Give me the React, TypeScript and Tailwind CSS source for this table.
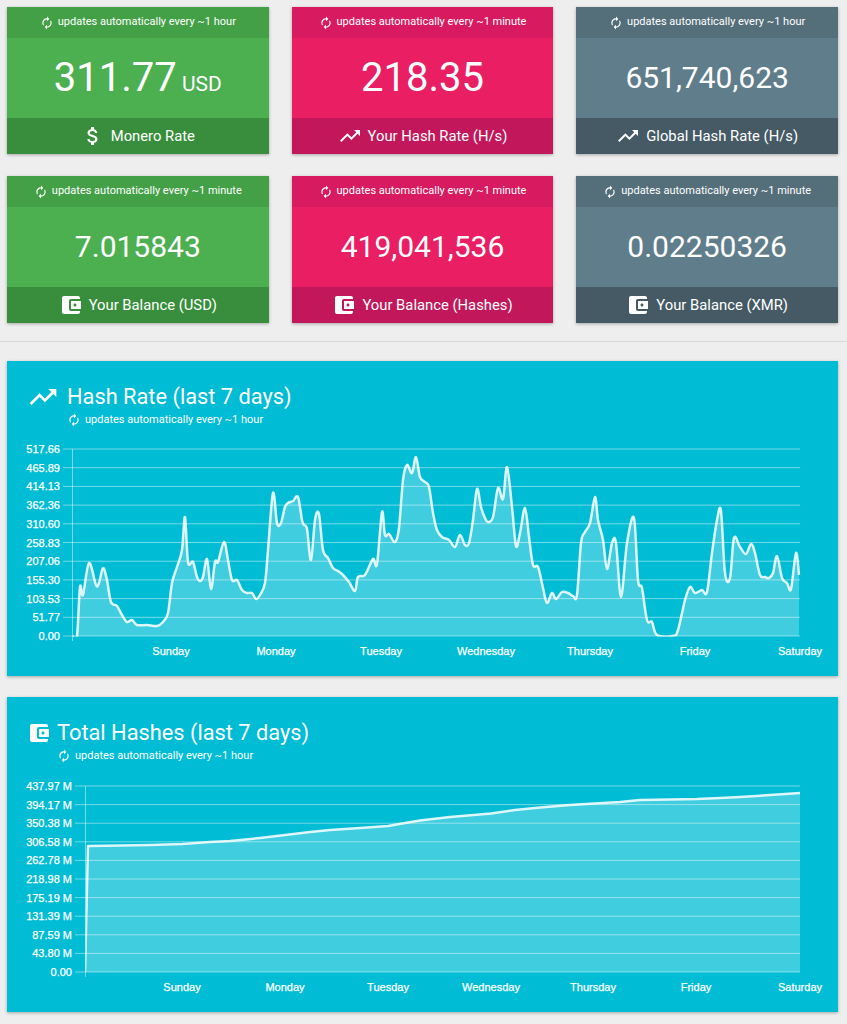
import type { ReactNode } from 'react'

const P_REFRESH =
  'M12 6v3l4-4-4-4v3c-4.42 0-8 3.58-8 8 0 1.57.46 3.03 1.24 4.26L6.7 14.8c-.45-.83-.7-1.79-.7-2.8 0-3.31 2.69-6 6-6zm6.76 1.74L17.3 9.2c.44.84.7 1.79.7 2.8 0 3.31-2.69 6-6 6v-3l-4 4 4 4v-3c4.42 0 8-3.58 8-8 0-1.570-.46-3.03-1.24-4.26z'
const P_TREND = 'M16 6l2.29 2.29-4.88 4.88-4-4L2 16.59 3.41 18l6-6 4 4 6.3-6.29L22 12V6z'
const P_DOLLAR =
  'M11.8 10.9c-2.27-.59-3-1.2-3-2.15 0-1.09 1.01-1.85 2.7-1.85 1.78 0 2.44.85 2.5 2.1h2.21c-.07-1.72-1.12-3.3-3.21-3.81V3h-3v2.16c-1.94.42-3.5 1.68-3.5 3.61 0 2.31 1.91 3.46 4.7 4.13 2.5.6 3 1.48 3 2.41 0 .69-.49 1.79-2.7 1.79-2.06 0-2.87-.92-2.98-2.1h-2.2c.12 2.19 1.76 3.42 3.68 3.830V21h3v-2.15c1.95-.37 3.5-1.5 3.5-3.55 0-2.84-2.43-3.81-4.7-4.4z'
const P_WALLET =
  'M21 18v1c0 1.1-.9 2-2 2H5c-1.11 0-2-.9-2-2V5c0-1.1.89-2 2-2h14c1.1 0 2 .9 2 2v1h-9c-1.11 0-2 .9-2 2v8c0 1.1.89 2 2 2h9zm-9-2h10V8H12v8zm4-2.5c-.83 0-1.5-.67-1.5-1.5s.67-1.5 1.5-1.5 1.5.67 1.5 1.5-.67 1.5-1.5 1.5z'

function Icon({ d, size }: { d: string; size: number }) {
  return (
    <svg width={size} height={size} viewBox="0 0 24 24" fill="currentColor" className="shrink-0">
      <path d={d} />
    </svg>
  )
}

type Tone = { head: string; main: string; foot: string }
const GREEN: Tone = { head: 'bg-[#43a047]', main: 'bg-[#4caf50]', foot: 'bg-[#388e3c]' }
const PINK: Tone = { head: 'bg-[#d81b60]', main: 'bg-[#e91e63]', foot: 'bg-[#c2185b]' }
const GREY: Tone = { head: 'bg-[#546e7a]', main: 'bg-[#607d8b]', foot: 'bg-[#455a64]' }

function StatCard({
  tone,
  every,
  value,
  big,
  unit,
  icon,
  label,
}: {
  tone: Tone
  every: string
  value: string
  big?: boolean
  unit?: string
  icon: string
  label: string
}) {
  return (
    <div className="overflow-hidden text-white shadow-[0_1px_3px_rgba(0,0,0,0.3)]">
      <div className={`flex h-[31px] items-center justify-center gap-[4px] text-[11px] ${tone.head}`}>
        <Icon d={P_REFRESH} size={14} />
        <span>updates automatically every ~{every}</span>
      </div>
      <div className={`flex h-[80px] items-center justify-center ${tone.main}`}>
        <span className={big ? 'text-[40px] leading-none' : 'text-[30px] leading-none'}>
          {value}
          {unit && <span className="text-[21px]"> {unit}</span>}
        </span>
      </div>
      <div className={`flex h-[36px] items-center justify-center gap-[6px] text-[14.8px] ${tone.foot}`}>
        <Icon d={icon} size={24} />
        <span>{label}</span>
      </div>
    </div>
  )
}

type Pt = [number, number]

function smooth(pts: Pt[]) {
  let d = `M${pts[0][0]},${pts[0][1]}`
  for (let i = 0; i < pts.length - 1; i++) {
    const p0 = pts[i - 1] || pts[i]
    const p1 = pts[i]
    const p2 = pts[i + 1]
    const p3 = pts[i + 2] || p2
    const c1x = p1[0] + (p2[0] - p0[0]) / 6
    const c1y = p1[1] + (p2[1] - p0[1]) / 6
    const c2x = p2[0] - (p3[0] - p1[0]) / 6
    const c2y = p2[1] - (p3[1] - p1[1]) / 6
    d += ` C${c1x.toFixed(1)},${c1y.toFixed(1)} ${c2x.toFixed(1)},${c2y.toFixed(1)} ${p2[0]},${p2[1]}`
  }
  return d
}

function straight(pts: Pt[]) {
  return pts.map((p, i) => `${i ? 'L' : 'M'}${p[0]},${p[1]}`).join(' ')
}

const HASH_RATE: Pt[] = [
  [72.7, 636], [77, 636], [80, 587], [83, 595], [89, 563], [96, 585], [99, 583], [103, 568], [107, 580],
  [111, 602], [117, 606], [122, 615], [127, 622], [132, 620], [137, 625], [147, 625], [157, 626], [163, 622],
  [168, 613], [172, 583], [177, 567], [182, 550], [185, 517], [188, 562], [193, 562], [197, 577], [200, 581],
  [203, 577], [207, 559], [211, 589], [215, 562], [218, 562], [224, 542], [228, 560], [232, 580], [237, 580],
  [242, 590], [247, 593], [252, 593], [256, 599], [260, 595], [265, 583], [268, 550], [273, 493], [277, 523],
  [281, 523], [285, 507], [288, 503], [293, 501], [298, 497], [302, 520], [304, 525], [307, 529], [311, 560],
  [315, 520], [319, 514], [323, 550], [328, 558], [333, 568], [338, 571], [343, 575], [349, 582], [355, 591],
  [358, 577], [365, 575], [373, 559], [377, 564], [382, 512], [385, 535], [389, 534], [395, 542], [399, 528],
  [403, 480], [407, 465], [412, 473], [416, 457], [420, 477], [425, 482], [429, 487], [433, 513], [437, 530],
  [442, 537], [449, 540], [455, 547], [460, 535], [465, 545], [469, 543], [473, 520], [477, 489], [481, 507],
  [485, 518], [488, 522], [493, 517], [498, 488], [503, 499], [507, 467], [512, 507], [516, 546], [520, 533],
  [525, 508], [529, 537], [533, 565], [538, 567], [543, 588], [547, 603], [552, 593], [556, 599], [562, 592],
  [568, 593], [573, 596], [577, 595], [581, 543], [585, 532], [590, 523], [595, 497], [598, 520], [603, 540],
  [607, 569], [612, 543], [616, 543], [621, 597], [627, 543], [634, 518], [638, 580], [642, 588], [647, 620],
  [652, 622], [657, 635], [673, 636], [678, 630], [685, 600], [690, 587], [695, 593], [702, 590], [707, 592],
  [712, 553], [717, 520], [721, 511], [725, 573], [730, 578], [734, 538], [740, 547], [746, 554], [751, 544],
  [755, 553], [760, 575], [765, 577], [769, 578], [773, 573], [777, 556], [782, 578], [787, 583], [791, 589],
  [796, 553], [799, 575],
]

const TOTAL: Pt[] = [
  [85, 972], [88, 846], [120, 845.5], [150, 845], [182, 844], [210, 842], [230, 841], [260, 838], [285, 835],
  [310, 832], [330, 830], [360, 828], [388, 826], [405, 823], [420, 820.5], [450, 817], [491, 813.5], [515, 810],
  [540, 807.5], [570, 805], [594, 803.5], [620, 802], [640, 800], [670, 799.5], [697, 799], [720, 798],
  [740, 797], [770, 795], [800, 793],
]

const DAYS = ['Sunday', 'Monday', 'Tuesday', 'Wednesday', 'Thursday', 'Friday', 'Saturday']

function Chart({
  top,
  axisX,
  labelX,
  gridTop,
  gridBottom,
  yLabels,
  dayX,
  pts,
  id,
  curved,
}: {
  top: number
  axisX: number
  labelX: number
  gridTop: number
  gridBottom: number
  yLabels: string[]
  dayX: number[]
  pts: Pt[]
  id: string
  curved?: boolean
}) {
  const step = (gridBottom - gridTop) / (yLabels.length - 1)
  const line = curved ? smooth(pts) : straight(pts)
  const last = pts[pts.length - 1]
  const area = `${line} L${last[0]},${gridBottom} L${pts[0][0]},${gridBottom} Z`
  return (
    <svg width={831} height={244} viewBox={`7 ${top} 831 244`} className="block">
      <defs>
        <clipPath id={id}>
          <rect x={axisX} y={gridTop - 40} width={800 - axisX + 1} height={gridBottom - gridTop + 40.5} />
        </clipPath>
      </defs>
      {yLabels.map((l, i) => {
        const y = gridTop + i * step
        return (
          <g key={l}>
            <line x1={labelX + 3} x2={800} y1={y} y2={y} stroke="rgba(255,255,255,0.45)" strokeWidth={1} />
            <text
              x={labelX}
              y={y + 4}
              textAnchor="end"
              fontSize={11}
              fill="#fff"
              stroke="#fff"
              strokeWidth={0.25}
              fontFamily="'Liberation Sans', Arial, sans-serif"
            >
              {l}
            </text>
          </g>
        )
      })}
      <line x1={axisX} x2={axisX} y1={gridTop} y2={gridBottom + 5} stroke="rgba(255,255,255,0.45)" strokeWidth={1} />
      <g clipPath={`url(#${id})`}>
        <path d={area} fill="rgba(255,255,255,0.25)" />
        <path d={line} fill="none" stroke="rgba(255,255,255,0.85)" strokeWidth={2.5} strokeLinejoin="round" />
      </g>
      {DAYS.map((d, i) => (
        <text
          key={d}
          x={dayX[i]}
          y={gridBottom + 19}
          textAnchor="middle"
          fontSize={11}
          fill="#fff"
          stroke="#fff"
          strokeWidth={0.25}
          fontFamily="'Liberation Sans', Arial, sans-serif"
        >
          {d}
        </text>
      ))}
    </svg>
  )
}

function ChartCard({
  icon,
  iconSize,
  gap,
  title,
  children,
}: {
  icon: string
  iconSize: number
  gap: number
  title: string
  children: ReactNode
}) {
  return (
    <div className="bg-[#00bcd4] pl-[20px] pt-[23px] text-white shadow-[0_1px_3px_rgba(0,0,0,0.3)]">
      <div className="flex h-[26px] items-center" style={{ gap }}>
        <Icon d={icon} size={iconSize} />
        <span className="text-[21.8px] leading-none">{title}</span>
      </div>
      <div
        className="mt-[2px] flex h-[16px] items-center gap-[4px] text-[11px]"
        style={{ marginLeft: iconSize + gap }}
      >
        <Icon d={P_REFRESH} size={14} />
        <span>updates automatically every ~1 hour</span>
      </div>
      <div className="-ml-[20px] mt-[4px]">{children}</div>
    </div>
  )
}

export default function App() {
  return (
    <div className="min-h-screen bg-[#eeeeee] pb-[12px] font-['Roboto',sans-serif]">
      <div className="grid grid-cols-3 gap-x-[23px] gap-y-[22px] pl-[7px] pr-[9px] pt-[7px]">
        <StatCard tone={GREEN} every="1 hour" value="311.77" big unit="USD" icon={P_DOLLAR} label="Monero Rate" />
        <StatCard tone={PINK} every="1 minute" value="218.35" big icon={P_TREND} label="Your Hash Rate (H/s)" />
        <StatCard tone={GREY} every="1 hour" value="651,740,623" icon={P_TREND} label="Global Hash Rate (H/s)" />
        <StatCard tone={GREEN} every="1 minute" value="7.015843" icon={P_WALLET} label="Your Balance (USD)" />
        <StatCard tone={PINK} every="1 minute" value="419,041,536" icon={P_WALLET} label="Your Balance (Hashes)" />
        <StatCard tone={GREY} every="1 minute" value="0.02250326" icon={P_WALLET} label="Your Balance (XMR)" />
      </div>
      <div className="mt-[18px] h-px bg-[#dadada]" />
      <div className="mt-[19px] flex flex-col gap-[21px] pl-[7px] pr-[9px]">
        <ChartCard icon={P_TREND} iconSize={32} gap={8} title="Hash Rate (last 7 days)">
          <Chart
            id="hr"
            curved
            top={432}
            axisX={72.5}
            labelX={60}
            gridTop={449}
            gridBottom={636}
            yLabels={['517.66', '465.89', '414.13', '362.36', '310.60', '258.83', '207.06', '155.30', '103.53', '51.77', '0.00']}
            dayX={[171, 276, 381, 486, 590, 695, 800]}
            pts={HASH_RATE}
          />
        </ChartCard>
        <ChartCard icon={P_WALLET} iconSize={24} gap={6} title="Total Hashes (last 7 days)">
          <Chart
            id="th"
            top={768}
            axisX={85.5}
            labelX={72}
            gridTop={786}
            gridBottom={972}
            yLabels={[
              '437.97 M', '394.17 M', '350.38 M', '306.58 M', '262.78 M', '218.98 M',
              '175.19 M', '131.39 M', '87.59 M', '43.80 M', '0.00',
            ]}
            dayX={[182, 285, 388, 491, 593, 696, 800]}
            pts={TOTAL}
          />
        </ChartCard>
      </div>
    </div>
  )
}
